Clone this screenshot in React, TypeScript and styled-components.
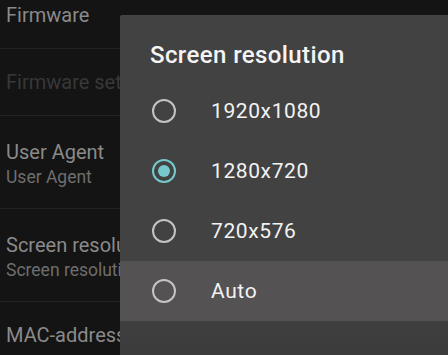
import * as React from "react"
import styled, { createGlobalStyle } from "styled-components"

const GlobalStyle = createGlobalStyle`
  html, body {
    margin: 0;
    padding: 0;
    background: #141414;
    overflow: hidden;
  }
  body {
    font-family: Roboto, "Noto Sans", sans-serif;
  }
`

const settings = [
  { title: "Firmware" },
  { title: "Firmware settings", disabled: true },
  { title: "User Agent", summary: "User Agent" },
  { title: "Screen resolution", summary: "Screen resolution" },
  { title: "MAC-address" },
]

const options = ["1920x1080", "1280x720", "720x576", "Auto"]

const App = () => {
  const selected = "1280x720"
  const focused = "Auto"
  return (
    <Screen>
      <GlobalStyle />
      <SettingsList>
        {settings.map((item) => (
          <SettingRow key={item.title} $twoLine={!!item.summary}>
            <SettingTitle $disabled={item.disabled}>{item.title}</SettingTitle>
            {item.summary && <SettingSummary>{item.summary}</SettingSummary>}
          </SettingRow>
        ))}
      </SettingsList>
      <Dialog>
        <DialogTitle>Screen resolution</DialogTitle>
        <OptionList>
          {options.map((opt) => (
            <OptionRow key={opt} $focused={opt === focused}>
              <Radio $checked={opt === selected} />
              <OptionLabel>{opt}</OptionLabel>
            </OptionRow>
          ))}
        </OptionList>
        <DialogFooter />
      </Dialog>
    </Screen>
  )
}

const Screen = styled.div`
  position: relative;
  width: 448px;
  height: 355px;
  overflow: hidden;
  background: #141414;
`

const SettingsList = styled.div`
  display: flex;
  flex-direction: column;
  margin-top: -18px;
`

const SettingRow = styled.div<{ $twoLine: boolean }>`
  display: flex;
  flex-direction: column;
  justify-content: center;
  height: ${(p) => (p.$twoLine ? 93 : 67)}px;
  padding-left: 6px;
  padding-top: ${(p) => (p.$twoLine ? 6 : 0)}px;
  border-bottom: 1px solid #222222;
  box-sizing: border-box;
  white-space: nowrap;
`

const SettingTitle = styled.div<{ $disabled?: boolean }>`
  font-size: 20px;
  line-height: 25px;
  color: ${(p) => (p.$disabled ? "#383838" : "#8a8a8a")};
`

const SettingSummary = styled.div`
  font-size: 17.5px;
  line-height: 25px;
  color: #6e6e6e;
`

const Dialog = styled.div`
  position: absolute;
  left: 120px;
  top: 15px;
  width: 360px;
  height: 360px;
  background: #424242;
  border-radius: 2px;
  display: flex;
  flex-direction: column;
`

const DialogTitle = styled.div`
  padding: 27px 0 12px 30px;
  font-size: 24px;
  line-height: 27px;
  font-weight: 500;
  letter-spacing: 0.4px;
  color: #f5f5f5;
`

const OptionList = styled.div`
  display: flex;
  flex-direction: column;
`

const OptionRow = styled.div<{ $focused?: boolean }>`
  display: flex;
  align-items: center;
  gap: 35px;
  height: 60px;
  padding-left: 32px;
  background: ${(p) => (p.$focused ? "#555253" : "transparent")};
`

const Radio = styled.span<{ $checked?: boolean }>`
  position: relative;
  width: 24px;
  height: 24px;
  box-sizing: border-box;
  border-radius: 50%;
  border: 2.5px solid ${(p) => (p.$checked ? "#76c8cc" : "#c4c4c4")};
  &::after {
    content: "";
    display: ${(p) => (p.$checked ? "block" : "none")};
    position: absolute;
    left: 50%;
    top: 50%;
    width: 12px;
    height: 12px;
    border-radius: 50%;
    background: #76c8cc;
    transform: translate(-50%, -50%);
  }
`

const OptionLabel = styled.span`
  font-size: 21px;
  letter-spacing: 0.6px;
  color: #f2f2f2;
`

const DialogFooter = styled.div`
  flex: 1;
  background: linear-gradient(#3f3f3f, #3a3a3a);
`

export default App
